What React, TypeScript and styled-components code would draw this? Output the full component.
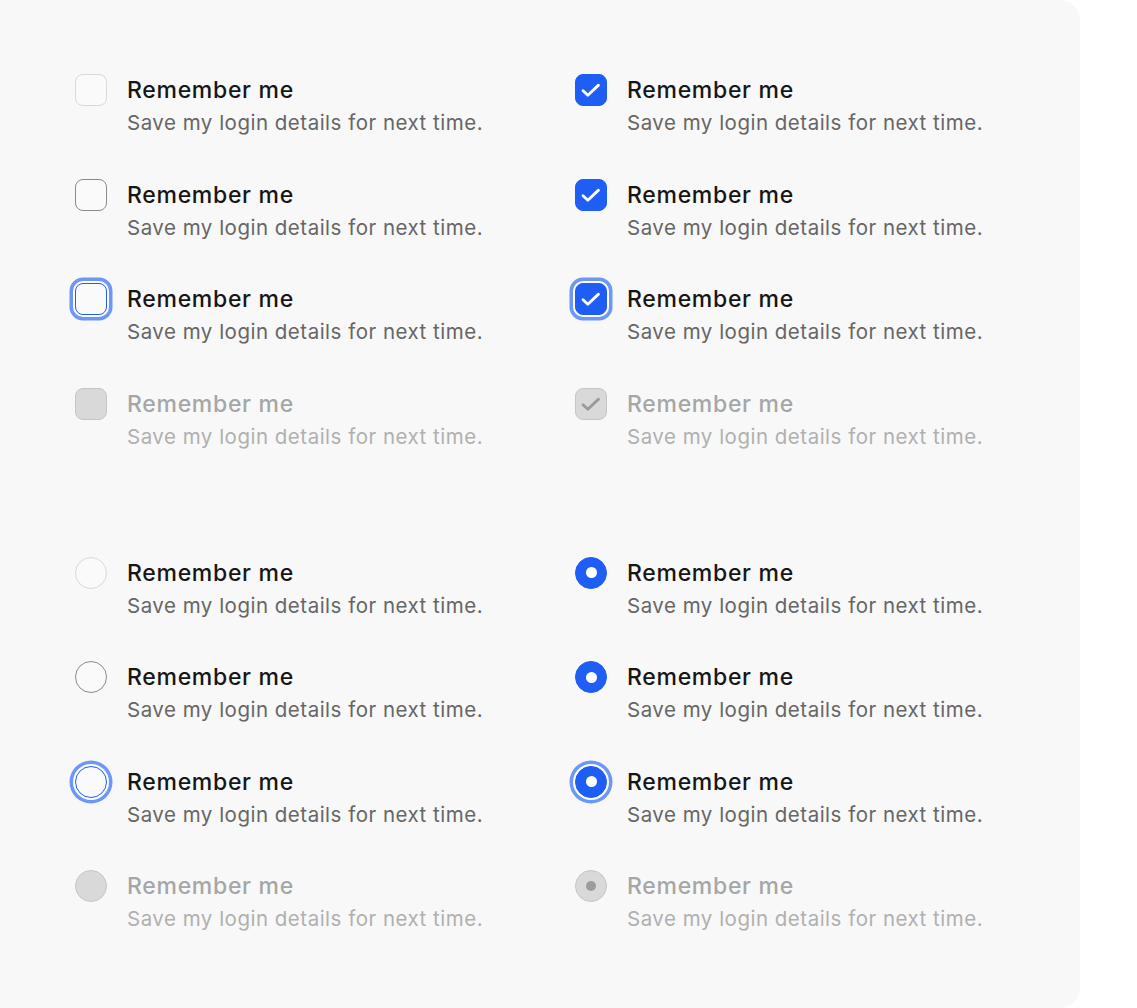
import React from "react";
import styled, { createGlobalStyle, css } from "styled-components";

const GlobalStyle = createGlobalStyle`
  html, body { margin: 0; padding: 0; background: #ffffff; }
  body { font-family: "Inter", "Noto Sans", sans-serif; -webkit-font-smoothing: antialiased; }
`;

const BLUE = "#1e5ef5";
const RING = "#6c96f7";

const Panel = styled.div`
  width: 1080px;
  height: 1008px;
  box-sizing: border-box;
  background: #f8f8f8;
  border-radius: 0 20px 20px 0;
  padding: 74px 0 0 75px;
  display: flex;
  flex-direction: column;
  gap: 104px;
`;

const Section = styled.div`
  display: grid;
  grid-template-columns: 500px 500px;
  row-gap: 39.5px;
`;

const Row = styled.label`
  display: flex;
  align-items: flex-start;
  gap: 20px;
`;

type State = "default" | "hover" | "focus" | "disabled";

const Box = styled.span<{ $state: State; $checked: boolean; $round?: boolean }>`
  flex: none;
  width: 32px;
  height: 32px;
  box-sizing: border-box;
  border-radius: ${(p) => (p.$round ? "50%" : "8px")};
  display: flex;
  align-items: center;
  justify-content: center;
  border: 1.5px solid #d9d9d9;
  background: #fafafa;
  ${(p) => p.$state === "hover" && css`border-color: #8a8a8a;`}
  ${(p) =>
    p.$state === "focus" &&
    css`
      border-color: ${BLUE};
      box-shadow: 0 0 0 2px #ffffff, 0 0 0 5.5px ${RING};
    `}
  ${(p) =>
    p.$checked &&
    p.$state !== "disabled" &&
    css`
      background: ${BLUE};
      border-color: ${BLUE};
    `}
  ${(p) =>
    p.$state === "disabled" &&
    css`
      background: #d9d9d9;
      border-color: #c6c6c6;
    `}
`;

const Dot = styled.span<{ $disabled: boolean }>`
  width: ${(p) => (p.$disabled ? "10px" : "11px")};
  height: ${(p) => (p.$disabled ? "10px" : "11px")};
  border-radius: 50%;
  background: ${(p) => (p.$disabled ? "#9c9c9c" : "#ffffff")};
`;

const Texts = styled.span`
  display: flex;
  flex-direction: column;
`;

const Title = styled.span<{ $disabled: boolean }>`
  font-size: 23px;
  line-height: 32px;
  font-weight: 500;
  letter-spacing: 0.7px;
  color: ${(p) => (p.$disabled ? "#a6a6a6" : "#161616")};
`;

const Desc = styled.span<{ $disabled: boolean }>`
  font-size: 20.5px;
  line-height: 32px;
  padding-top: 1px;
  font-weight: 400;
  letter-spacing: 0.5px;
  color: ${(p) => (p.$disabled ? "#b0b0b0" : "#666666")};
`;

const Check = ({ color }: { color: string }) => (
  <svg width="32" height="32" viewBox="0 0 32 32" fill="none">
    <path
      d="M7.5 16.8 L12.6 21.6 L24 10.8"
      stroke={color}
      strokeWidth="3"
      strokeLinecap="round"
      strokeLinejoin="round"
    />
  </svg>
);

const Item = ({
  kind,
  state,
  checked,
}: {
  kind: "checkbox" | "radio";
  state: State;
  checked: boolean;
}) => {
  const disabled = state === "disabled";
  return (
    <Row>
      <Box $state={state} $checked={checked} $round={kind === "radio"}>
        {checked && kind === "checkbox" && <Check color={disabled ? "#9a9a9a" : "#ffffff"} />}
        {checked && kind === "radio" && <Dot $disabled={disabled} />}
      </Box>
      <Texts>
        <Title $disabled={disabled}>Remember me</Title>
        <Desc $disabled={disabled}>Save my login details for next time.</Desc>
      </Texts>
    </Row>
  );
};

const states: State[] = ["default", "hover", "focus", "disabled"];

export default function App() {
  return (
    <>
      <GlobalStyle />
      <Panel>
        {(["checkbox", "radio"] as const).map((kind) => (
          <Section key={kind}>
            {states.map((s) => (
              <React.Fragment key={s}>
                <Item kind={kind} state={s} checked={false} />
                <Item kind={kind} state={s} checked={true} />
              </React.Fragment>
            ))}
          </Section>
        ))}
      </Panel>
    </>
  );
}
